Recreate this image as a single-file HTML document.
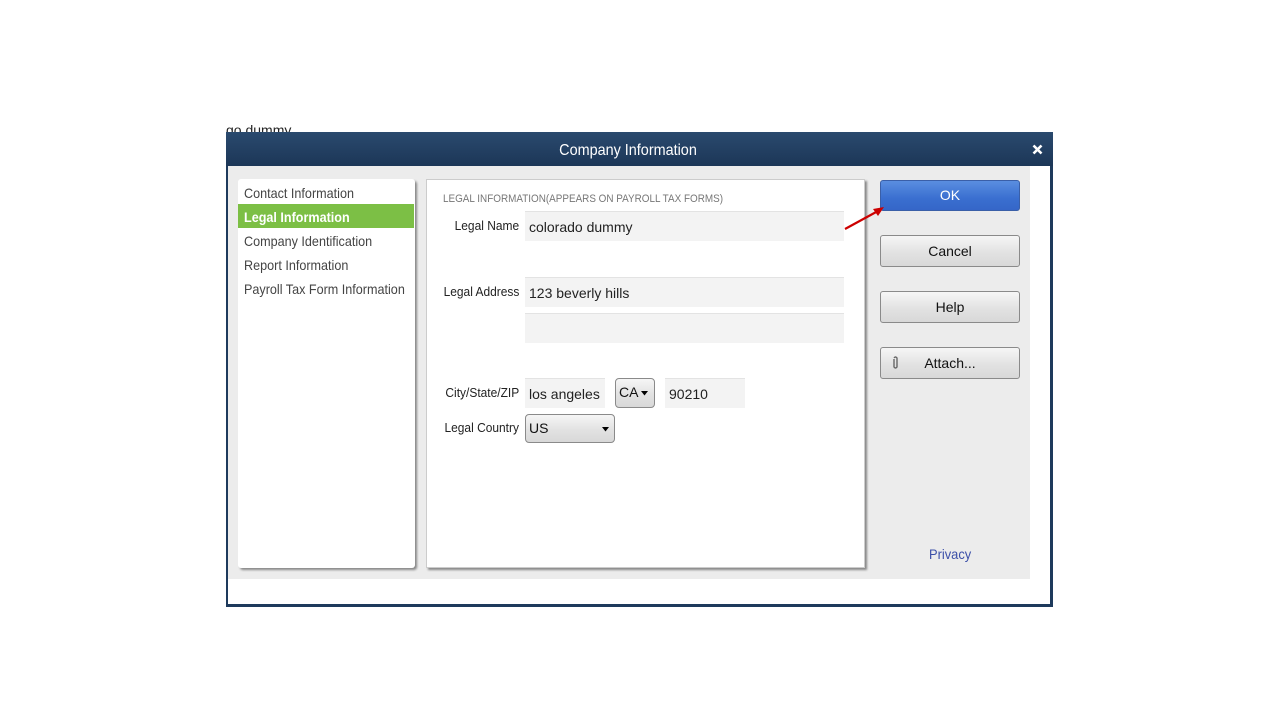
<!DOCTYPE html>
<html><head><meta charset="utf-8"><style>
*{margin:0;padding:0;box-sizing:border-box}
body{width:1280px;height:720px;background:#fff;position:relative;overflow:hidden;font-family:"Liberation Sans",sans-serif}
.a{position:absolute}
.lbl{font-size:13px;color:#222;transform:scaleX(.92);transform-origin:right center;text-align:right;white-space:nowrap}
.inp{background:#f3f3f3;border-top:1px solid #e3e3e3;font-size:14px;color:#222;padding:7px 4px;transform-origin:left}
.btn{border:1px solid #8a8a8a;border-radius:3px;background:linear-gradient(#f6f6f6,#e2e2e2 55%,#d8d8d8);font-size:14px;color:#111;text-align:center}
.nav{font-size:14px;color:#444;left:244px;transform:scaleX(.9);transform-origin:left;white-space:nowrap}
</style></head><body>
<div class="a" style="left:226px;top:122px;font-size:14px;color:#222;line-height:16px">go dummy</div>
<div class="a" style="left:226px;top:132px;width:827px;height:475px;background:#1e3a5c"></div>
<div class="a" style="left:226px;top:132px;width:827px;height:34px;background:linear-gradient(#2a4a6e,#1c3657)"></div>
<div class="a" style="left:226px;top:142px;width:804px;text-align:center;color:#fff;font-size:16px;transform:scaleX(.9)">Company Information</div>
<svg class="a" style="left:1032px;top:144px" width="11" height="11"><path d="M1.5 1.5L9.5 9.5M9.5 1.5L1.5 9.5" stroke="#fff" stroke-width="2.6"/></svg>
<div class="a" style="left:228px;top:166px;width:822px;height:438px;background:#fff"></div>
<div class="a" style="left:228px;top:166px;width:802px;height:413px;background:#ececec"></div>
<div class="a" style="left:238px;top:179px;width:177px;height:389px;background:#fff;border-radius:3px;box-shadow:2px 2px 2px #888"></div>
<div class="a nav" style="top:185px">Contact Information</div>
<div class="a" style="left:238px;top:204px;width:176px;height:24px;background:#7cbf45"></div>
<div class="a nav" style="top:209px;color:#fff;font-weight:bold">Legal Information</div>
<div class="a nav" style="top:233px">Company Identification</div>
<div class="a nav" style="top:257px">Report Information</div>
<div class="a nav" style="top:281px">Payroll Tax Form Information</div>
<div class="a" style="left:426px;top:179px;width:439px;height:389px;background:#fff;border:1px solid #ccc;box-shadow:2px 2px 2px #888"></div>
<div class="a" style="left:443px;top:193px;font-size:11px;color:#777;transform:scaleX(.9);transform-origin:left;white-space:nowrap">LEGAL INFORMATION(APPEARS ON PAYROLL TAX FORMS)</div>
<div class="a lbl" style="right:761px;top:218px">Legal Name</div>
<div class="a inp" style="left:525px;top:211px;width:319px;height:30px">colorado dummy</div>
<div class="a lbl" style="right:761px;top:284px">Legal Address</div>
<div class="a inp" style="left:525px;top:277px;width:319px;height:30px">123 beverly hills</div>
<div class="a inp" style="left:525px;top:313px;width:319px;height:30px"></div>
<div class="a lbl" style="right:761px;top:385px">City/State/ZIP</div>
<div class="a inp" style="left:525px;top:378px;width:80px;height:30px">los angeles</div>
<div class="a btn" style="left:615px;top:378px;width:40px;height:30px;text-align:left;padding:5px 3px;border-radius:4px">CA<svg style="position:absolute;right:6px;top:12px" width="7" height="5"><path d="M0 0H7L3.5 4.5Z"/></svg></div>
<div class="a inp" style="left:665px;top:378px;width:80px;height:30px">90210</div>
<div class="a lbl" style="right:761px;top:420px">Legal Country</div>
<div class="a btn" style="left:525px;top:414px;width:90px;height:29px;text-align:left;padding:5px 3px;border-radius:4px">US<svg style="position:absolute;right:5px;top:12px" width="7" height="5"><path d="M0 0H7L3.5 4.5Z"/></svg></div>
<div class="a" style="left:880px;top:180px;width:140px;height:31px;border:1px solid #3a5fa8;border-radius:3px;background:linear-gradient(#5a8ee0,#3a6fd0 60%,#3566c8);color:#fff;font-size:14px;text-align:center;line-height:29px">OK</div>
<div class="a btn" style="left:880px;top:235px;width:140px;height:32px;line-height:30px">Cancel</div>
<div class="a btn" style="left:880px;top:291px;width:140px;height:32px;line-height:30px">Help</div>
<div class="a btn" style="left:880px;top:347px;width:140px;height:32px;line-height:30px">Attach...</div>
<svg class="a" style="left:892px;top:356px" width="7" height="14"><path d="M2 3V11Q3.5 13 5 11V2Q3.5 0 2 2" fill="none" stroke="#666" stroke-width="1.4"/></svg>
<div class="a" style="left:929px;top:546px;font-size:14px;color:#3b4fa8;transform:scaleX(.92);transform-origin:left">Privacy</div>
<svg class="a" style="left:840px;top:200px" width="50" height="35"><path d="M5 29L38 11" stroke="#c00" stroke-width="2.2"/><path d="M44 7L33 9L38 16Z" fill="#c00"/></svg>
</body></html>
